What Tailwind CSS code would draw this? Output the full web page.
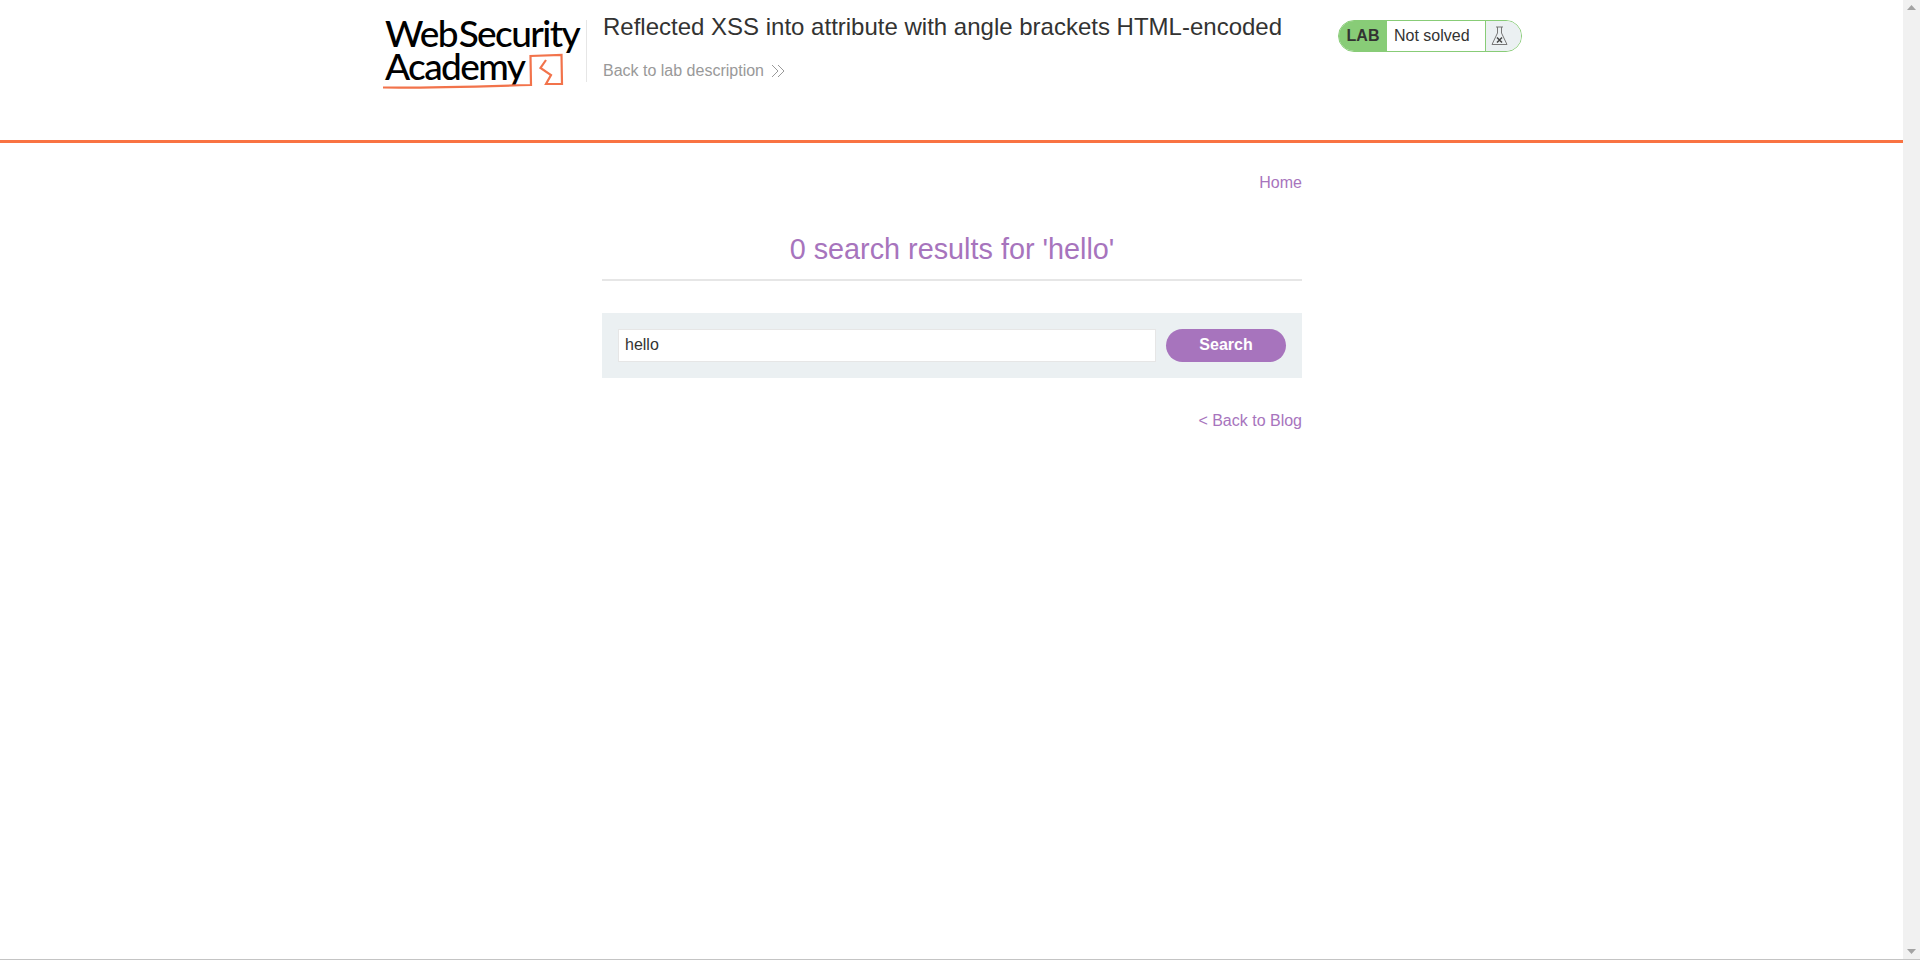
<!DOCTYPE html>
<html lang="en">
<head>
    <meta charset="UTF-8">
    <title>Reflected XSS into attribute with angle brackets HTML-encoded</title>
    <script src="https://cdn.jsdelivr.net/npm/@tailwindcss/browser@4"></script>
</head>
<body class="h-screen overflow-hidden bg-white font-['Liberation_Sans',Arial,sans-serif] text-[#333332] flex flex-col">
    <div class="flex flex-1 min-h-0">
        <div class="flex-1 min-w-0">
            <!-- lab header -->
            <header class="h-[143px] border-b-[3px] border-[#f97342] flex items-start pl-[383px]">
                <a href="#" class="relative block w-[203px] h-[90px] mt-[13px] shrink-0">
                    <div class="pl-[2px] pt-[3px] font-['Lato',sans-serif] font-medium text-[37px] leading-[33px] tracking-[-1.6px] [word-spacing:-6px] text-black">
                        <div class="whitespace-nowrap">Web Security</div>
                        <div class="whitespace-nowrap">Academy</div>
                    </div>
                    <svg class="absolute left-0 top-[38px]" width="185" height="44" viewBox="0 0 185 44" fill="none" stroke="#f2734b" stroke-width="2.2">
                        <path d="M0 36.5 C30 37 80 36 148 34 L147.500 5 L178.500 4 L179 33 L163 33 L168 24 L157.500 17 L163 9"/>
                    </svg>
                </a>
                <div class="w-px h-[62px] bg-[#e6e6e6] mt-[20px] shrink-0"></div>
                <div class="pl-[16px] w-[700px] shrink-0">
                    <h2 class="text-[24px] leading-[28px] mt-[13px] whitespace-nowrap">Reflected XSS into attribute with angle brackets HTML-encoded</h2>
                    <a href="#" class="flex items-center gap-[7px] mt-[21px] text-[16px] leading-[18px] text-[#999]">
                        Back to lab description
                        <svg width="14" height="14" viewBox="0 0 14 14" fill="none" stroke="#999" stroke-width="1"><path d="M1 1 L7 7 L1 13"/><path d="M7 1 L13 7 L7 13"/></svg>
                    </a>
                </div>
                <div class="ml-[51px] mt-[20px] w-[184px] h-[32px] flex rounded-full border border-[#88cc77] overflow-hidden shrink-0">
                    <span class="w-[48px] bg-[#88cc77] font-bold text-[16px] flex items-center justify-center">LAB</span>
                    <span class="w-[99px] border-r border-[#88cc77] text-[16px] flex items-center pl-[7px]">Not solved</span>
                    <span class="flex-1 bg-[#ebf0f2] flex items-center pl-[5px]">
                        <svg width="17" height="20" viewBox="0 0 17 20" fill="none" stroke="#777" stroke-width="1"><path d="M5 1 L12 1 M6.5 1 L6.5 7 L1 18.5 L16 18.5 L10.5 7 L10.5 1"/><path d="M6 11.5 L11 16.5 M11 11.5 L6 16.5" stroke="#444" stroke-width="1.5"/></svg>
                    </span>
                </div>
            </header>

            <main class="w-[700px] ml-[602px]">
                <div class="text-right text-[16px] leading-[18px] text-[#a774bd] mt-[31px]">
                    <a href="#">Home</a>
                </div>
                <h1 class="text-[28.8px] leading-[32px] text-center text-[#a774bd] mt-[41px] pb-[14px] border-b-2 border-[#e6e6e6]">0 search results for 'hello'</h1>
                <form class="mt-[32px] h-[65px] bg-[#ebf0f2] flex items-start gap-[10px] px-[16px] pt-[16px]">
                    <input type="text" value="hello" class="w-[538px] h-[33px] bg-white border border-[#e6e6e6] px-[6px] pb-[2px] text-[16px] text-[#333332]">
                    <button type="button" class="w-[120px] h-[33px] rounded-full bg-[#a774bd] text-white font-bold text-[16px] pb-[2px]">Search</button>
                </form>
                <div class="text-right text-[16px] leading-[18px] text-[#a774bd] mt-[34px]">
                    <a href="#">&lt; Back to Blog</a>
                </div>
            </main>
        </div>
        <!-- scrollbar -->
        <div class="w-[17px] bg-[#f1f1f1] flex flex-col justify-between items-center py-[5px] shrink-0">
            <svg width="9" height="5" viewBox="0 0 9 5" fill="#a3a3a3"><path d="M4.5 0 L9 5 L0 5 Z"/></svg>
            <svg width="9" height="5" viewBox="0 0 9 5" fill="#a3a3a3"><path d="M0 0 L9 0 L4.5 5 Z"/></svg>
        </div>
    </div>
    <div class="h-px bg-[#c4c4c4] shrink-0"></div>
</body>
</html>
